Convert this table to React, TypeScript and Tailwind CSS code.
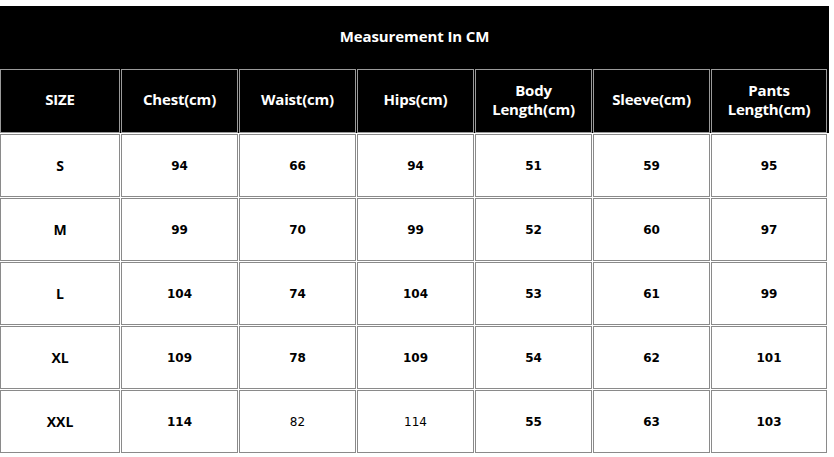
import React from "react";

const headers: string[][] = [
  ["SIZE"],
  ["Chest(cm)"],
  ["Waist(cm)"],
  ["Hips(cm)"],
  ["Body", "Length(cm)"],
  ["Sleeve(cm)"],
  ["Pants", "Length(cm)"],
];

const rows: { size: string; vals: string[] }[] = [
  { size: "S", vals: ["94", "66", "94", "51", "59", "95"] },
  { size: "M", vals: ["99", "70", "99", "52", "60", "97"] },
  { size: "L", vals: ["104", "74", "104", "53", "61", "99"] },
  { size: "XL", vals: ["109", "78", "109", "54", "62", "101"] },
  { size: "XXL", vals: ["114", "82", "114", "55", "63", "103"] },
];

const gridCols =
  "grid grid-cols-[120px_117px_117px_117px_117px_117px_116px] gap-[1px]";

export default function App() {
  return (
    <div className="w-[834px] h-[457px] bg-white pt-[6px] overflow-hidden">
      <div className="w-[829px] h-[63px] bg-black flex items-center justify-center pb-[2px]">
        <span className="text-white font-bold text-[15px] font-['Open_Sans',sans-serif] tracking-[-0.1px]">
          Measurement In CM
        </span>
      </div>
      <div className={`${gridCols} w-[829px] bg-black`}>
        {headers.map((h, i) => (
          <div
            key={i}
            className="h-[64px] border border-[#9a9a9a] bg-black flex flex-col items-center justify-center pb-[3px] text-white font-bold text-[15px] leading-[19px] font-['Open_Sans',sans-serif] tracking-[-0.2px]"
          >
            {h.map((line, j) => (
              <span key={j}>{line}</span>
            ))}
          </div>
        ))}
      </div>
      {rows.map((r, ri) => (
        <div key={ri} className={`${gridCols} w-[829px] mt-[1px]`}>
          <div className="h-[63px] border border-[#8a8a8a] flex items-center justify-center text-black font-bold text-[14px] font-['Open_Sans',sans-serif]">
            {r.size}
          </div>
          {r.vals.map((v, vi) => {
            const light = ri === 4 && (vi === 1 || vi === 2);
            return (
              <div
                key={vi}
                className={`h-[63px] border border-[#8a8a8a] flex items-center justify-center text-black text-[12px] font-['DejaVu_Sans',sans-serif] ${
                  light ? "font-normal" : "font-bold"
                }`}
              >
                {v}
              </div>
            );
          })}
        </div>
      ))}
    </div>
  );
}
